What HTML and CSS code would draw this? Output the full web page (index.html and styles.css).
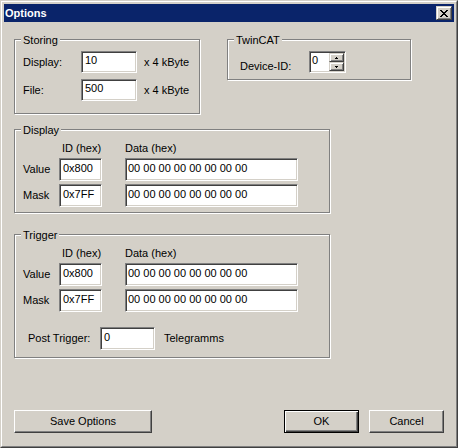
FILE: index.html
```html
<!DOCTYPE html>
<html>
<head>
<meta charset="utf-8">
<title>Options</title>
<link rel="stylesheet" href="styles.css">
</head>
<body>
<div class="window">
  <div class="frame">
    <div class="titlebar">
      <span class="title">Options</span>
      <span class="close-btn">
        <svg width="8" height="7" viewBox="0 0 8 7" shape-rendering="crispEdges">
          <rect x="0" y="0" width="2" height="1" fill="#000"/><rect x="6" y="0" width="2" height="1" fill="#000"/>
          <rect x="1" y="1" width="2" height="1" fill="#000"/><rect x="5" y="1" width="2" height="1" fill="#000"/>
          <rect x="2" y="2" width="4" height="1" fill="#000"/>
          <rect x="3" y="3" width="2" height="1" fill="#000"/>
          <rect x="2" y="4" width="4" height="1" fill="#000"/>
          <rect x="1" y="5" width="2" height="1" fill="#000"/><rect x="5" y="5" width="2" height="1" fill="#000"/>
          <rect x="0" y="6" width="2" height="1" fill="#000"/><rect x="6" y="6" width="2" height="1" fill="#000"/>
        </svg>
      </span>
    </div>
    <div class="client">
      <div class="row-top">
        <div class="group storing">
          <span class="group-title">Storing</span>
          <div class="storing-grid">
            <span>Display:</span><div class="field storing-field">10</div><span>x 4 kByte</span>
            <span>File:</span><div class="field storing-field">500</div><span>x 4 kByte</span>
          </div>
        </div>
        <div class="group twincat">
          <span class="group-title">TwinCAT</span>
          <div class="device-row">
            <span class="device-label">Device-ID:</span>
            <div class="spin">
              <span class="spin-value">0</span>
              <div class="spin-buttons">
                <span class="spin-btn">
                  <svg width="3" height="2" viewBox="0 0 3 2" shape-rendering="crispEdges"><rect x="1" y="0" width="1" height="1" fill="#000"/><rect x="0" y="1" width="3" height="1" fill="#000"/></svg>
                </span>
                <span class="spin-btn">
                  <svg width="3" height="2" viewBox="0 0 3 2" shape-rendering="crispEdges"><rect x="0" y="0" width="3" height="1" fill="#000"/><rect x="1" y="1" width="1" height="1" fill="#000"/></svg>
                </span>
              </div>
            </div>
          </div>
        </div>
      </div>

      <div class="group can display">
        <span class="group-title">Display</span>
        <div class="can-grid">
          <span></span><span class="col-head id-head">ID (hex)</span><span class="col-head">Data (hex)</span>
          <span>Value</span><div class="field id-field">0x800</div><div class="field data-field">00 00 00 00 00 00 00 00</div>
          <span>Mask</span><div class="field id-field">0x7FF</div><div class="field data-field">00 00 00 00 00 00 00 00</div>
        </div>
      </div>

      <div class="group can trigger">
        <span class="group-title">Trigger</span>
        <div class="can-grid">
          <span></span><span class="col-head id-head">ID (hex)</span><span class="col-head">Data (hex)</span>
          <span>Value</span><div class="field id-field">0x800</div><div class="field data-field">00 00 00 00 00 00 00 00</div>
          <span>Mask</span><div class="field id-field">0x7FF</div><div class="field data-field">00 00 00 00 00 00 00 00</div>
        </div>
        <div class="post-row">
          <span class="post-label">Post Trigger:</span>
          <div class="field post-field">0</div>
          <span>Telegramms</span>
        </div>
      </div>

      <div class="button-row">
        <div class="btn save-btn">Save Options</div>
        <div class="btn-group">
          <div class="btn default-btn">OK</div>
          <div class="btn">Cancel</div>
        </div>
      </div>
    </div>
  </div>
</div>
</body>
</html>
```

FILE: styles.css
```css
html, body {
  margin: 0;
  padding: 0;
  background: #d4d0c8;
}

body {
  font-family: "Liberation Sans", Arial, sans-serif;
  font-size: 11px;
  line-height: 13px;
  color: #000;
}

.window {
  width: 458px;
  height: 448px;
  box-sizing: border-box;
  background: #d4d0c8;
  border: 1px solid;
  border-color: #d4d0c8 #404040 #404040 #d4d0c8;
}

.frame {
  height: 100%;
  box-sizing: border-box;
  border: 1px solid;
  border-color: #ffffff #808080 #808080 #ffffff;
  padding: 2px;
  display: flex;
  flex-direction: column;
}

.titlebar {
  height: 18px;
  flex: none;
  background: #0a246a;
  color: #fff;
  display: flex;
  align-items: center;
  justify-content: space-between;
  padding: 0 2px 0 1px;
}

.title {
  font-weight: bold;
  font-size: 11px;
}

.close-btn {
  width: 16px;
  height: 14px;
  box-sizing: border-box;
  background: #d4d0c8;
  border: 1px solid;
  border-color: #d4d0c8 #404040 #404040 #d4d0c8;
  box-shadow: inset 1px 1px 0 #fff, inset -1px -1px 0 #808080;
  display: flex;
  align-items: center;
  justify-content: center;
}

.close-btn svg {
  display: block;
}

.client {
  flex: 1;
  padding: 17px 10px 0 10px;
  display: flex;
  flex-direction: column;
}

.row-top {
  display: flex;
  align-items: flex-start;
  gap: 27px;
}

.group {
  position: relative;
  box-sizing: border-box;
  border: 1px solid #808080;
  box-shadow: inset 1px 1px 0 #fff, 1px 1px 0 #fff;
}

.group-title {
  position: absolute;
  left: 6px;
  top: -6px;
  padding: 0 2px;
  background: #d4d0c8;
  line-height: 13px;
}

.field {
  box-sizing: border-box;
  background: #fff;
  border: 1px solid;
  border-color: #808080 #ffffff #ffffff #808080;
  box-shadow: inset 1px 1px 0 #404040, inset -1px -1px 0 #d4d0c8;
  padding: 0 3px 3px 3px;
  display: flex;
  align-items: center;
  white-space: nowrap;
}

/* Storing */
.storing {
  width: 186px;
  height: 75px;
  padding: 11px 0 0 8px;
}

.storing-grid {
  display: grid;
  grid-template-columns: 51px 56px auto;
  grid-auto-rows: 22px;
  column-gap: 7px;
  row-gap: 6px;
  align-items: center;
}

.storing-field {
  height: 22px;
}

/* TwinCAT */
.twincat {
  width: 184px;
  height: 41px;
  padding: 11px 0 0 12px;
}

.device-row {
  display: flex;
  align-items: center;
}

.device-label {
  width: 69px;
  padding-top: 8px;
}

.spin {
  width: 37px;
  height: 22px;
  box-sizing: border-box;
  background: #fff;
  border: 1px solid;
  border-color: #808080 #ffffff #ffffff #808080;
  box-shadow: inset 1px 1px 0 #404040, inset -1px -1px 0 #d4d0c8;
  padding: 1px;
  display: flex;
}

.spin-value {
  flex: 1;
  padding: 1px 0 0 1px;
}

.spin-buttons {
  width: 15px;
  display: flex;
  flex-direction: column;
}

.spin-btn {
  height: 9px;
  box-sizing: border-box;
  background: #d4d0c8;
  border: 1px solid;
  border-color: #d4d0c8 #404040 #404040 #d4d0c8;
  box-shadow: inset 1px 1px 0 #fff, inset -1px -1px 0 #808080;
  display: flex;
  align-items: center;
  justify-content: center;
}

.spin-btn svg {
  display: block;
}

/* CAN groups */
.can {
  width: 316px;
  padding: 12px 0 0 8px;
}

.display {
  height: 84px;
  margin-top: 15px;
}

.trigger {
  height: 124px;
  margin-top: 21px;
}

.can-grid {
  display: grid;
  grid-template-columns: 36px 66px 173px;
  grid-template-rows: 13px 23px 23px;
  row-gap: 3px;
  align-items: center;
}

.id-head {
  padding-left: 3px;
}

.id-field {
  width: 43px;
  height: 23px;
}

.data-field {
  width: 173px;
  height: 23px;
  padding-left: 2px;
}

.post-row {
  display: flex;
  align-items: center;
  margin-top: 15px;
  padding-left: 5px;
}

.post-label {
  width: 72px;
}

.post-field {
  width: 55px;
  height: 23px;
  margin-right: 9px;
}

/* Buttons */
.button-row {
  display: flex;
  justify-content: space-between;
  margin-top: 52px;
}

.btn-group {
  display: flex;
  gap: 10px;
}

.btn {
  width: 75px;
  height: 23px;
  box-sizing: border-box;
  background: #d4d0c8;
  border: 1px solid;
  border-color: #ffffff #404040 #404040 #ffffff;
  box-shadow: inset -1px -1px 0 #808080;
  display: flex;
  align-items: center;
  justify-content: center;
}

.save-btn {
  width: 138px;
}

.default-btn {
  border: 1px solid #000;
  box-shadow: inset 1px 1px 0 #fff, inset -1px -1px 0 #404040, inset -2px -2px 0 #808080;
}
```
